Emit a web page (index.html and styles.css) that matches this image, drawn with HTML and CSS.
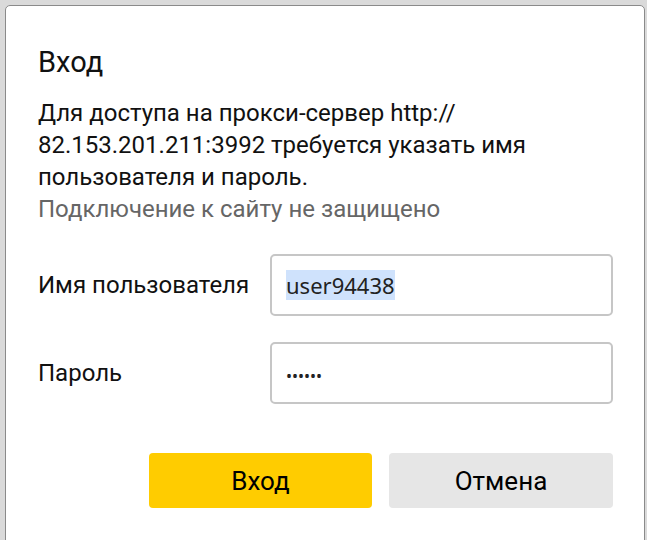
FILE: index.html
```html
<!DOCTYPE html>
<html lang="ru">

<head>
    <meta charset="UTF-8">
    <meta name="viewport" content="width=device-width, initial-scale=1.0">
    <title>Вход</title>
    <link rel="stylesheet" href="styles.css">
</head>

<body>

    <!-- Proxy auth dialog -->
    <div class="dialog">
        <h1 class="dialog-title">Вход</h1>

        <div class="dialog-text">
            <p>Для доступа на прокси-сервер http://<wbr>82.153.201.211:3992 требуется указать имя пользователя и пароль.</p>
            <p class="muted">Подключение к сайту не защищено</p>
        </div>

        <div class="form">
            <div class="form-row">
                <label class="form-label">Имя пользователя</label>
                <div class="field"><span class="selected">user94438</span></div>
            </div>
            <div class="form-row">
                <label class="form-label">Пароль</label>
                <div class="field field-password">••••••</div>
            </div>
        </div>

        <div class="actions">
            <button class="btn btn-primary">Вход</button>
            <button class="btn btn-secondary">Отмена</button>
        </div>
    </div>

</body>

</html>
```

FILE: styles.css
```css
* {
    margin: 0;
    padding: 0;
    box-sizing: border-box;
}

body {
    font-family: Roboto, "Liberation Sans", sans-serif;
    background-color: #dadada;
    color: #111;
    height: 540px;
    overflow: hidden;
}

.dialog {
    margin: 5px 0 0 5px;
    width: 640px;
    height: 545px;
    background-color: #fff;
    border: 1px solid #8a8a8a;
    border-radius: 5px;
    padding: 39px 31px 0 32px;
}

.dialog-title {
    font-size: 29px;
    font-weight: 400;
    line-height: 34px;
    color: #111;
    margin-bottom: 18px;
}

.dialog-text {
    font-size: 24px;
    line-height: 32px;
}

.muted {
    color: #666;
}

/* Form rows */
.form {
    margin-top: 29px;
    display: flex;
    flex-direction: column;
    gap: 26px;
}

.form-row {
    display: flex;
    align-items: center;
    justify-content: space-between;
}

.form-label {
    font-size: 24px;
}

.field {
    width: 343px;
    height: 62px;
    border: 2px solid #c6c6c6;
    border-radius: 5px;
    padding: 0 14px;
    display: flex;
    align-items: center;
    font-family: "Noto Sans", sans-serif;
    font-size: 22px;
    color: #222;
}

.selected {
    background-color: #cfe2fc;
}

.field-password {
    font-size: 16px;
    padding-top: 5px;
}

/* Buttons */
.actions {
    margin-top: 49px;
    display: flex;
    justify-content: flex-end;
    gap: 17px;
}

.btn {
    width: 223px;
    height: 55px;
    border: none;
    border-radius: 4px;
    font-family: Roboto, "Liberation Sans", sans-serif;
    font-size: 26px;
    color: #000;
    cursor: pointer;
}

.btn-primary {
    background-color: #ffcc00;
}

.btn-secondary {
    width: 224px;
    background-color: #e6e6e6;
}
```
